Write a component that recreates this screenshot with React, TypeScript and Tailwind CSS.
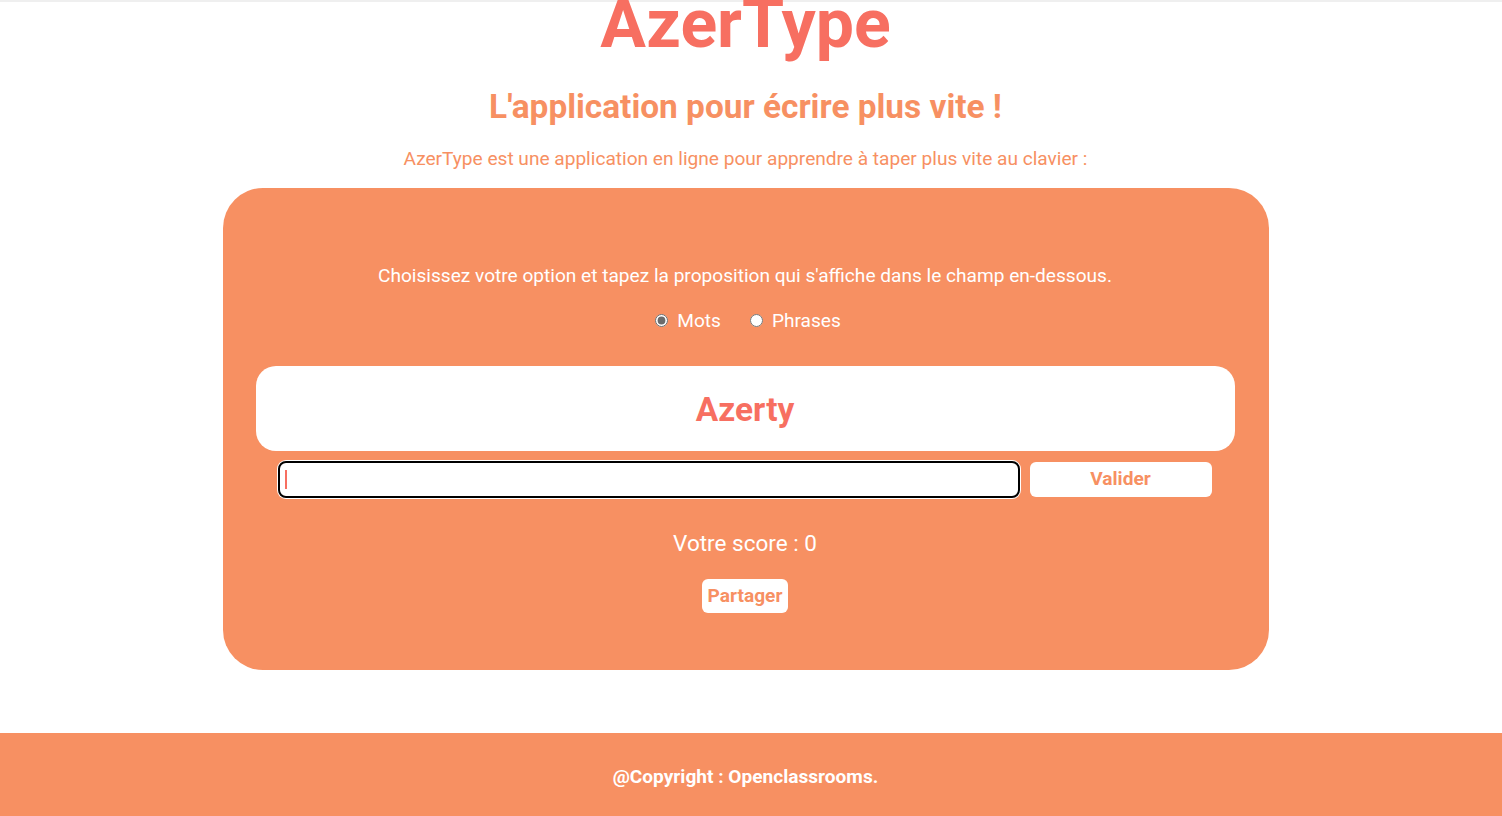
import { useState } from "react";

const App = () => {
  const [option, setOption] = useState("mots");

  return (
    <div className="min-h-screen bg-white font-['Roboto',sans-serif]">
      <div className="h-[2px] bg-[#efefef]" />
      <main className="pr-[11px] flex flex-col items-center">
        <h1 className="mt-[-12px] text-[68px] leading-none font-bold text-[#f76f61]">
          AzerType
        </h1>
        <h2 className="mt-[32px] text-[33.4px] leading-none font-bold text-[#f79062]">
          L'application pour écrire plus vite !
        </h2>
        <p className="mt-[26px] text-[19.1px] leading-none text-[#f79062]">
          AzerType est une application en ligne pour apprendre à taper plus vite au clavier :
        </p>

        <section className="mt-[19px] w-[1046px] rounded-[40px] bg-[#f79062] pl-[33px] pr-[34px] pt-[78px] pb-[57px] flex flex-col items-center text-white">
          <p className="text-[19.1px] leading-none">
            Choisissez votre option et tapez la proposition qui s'affiche dans le champ en-dessous.
          </p>
          <div className="mt-[26px] ml-[6px] flex items-center gap-[29px] text-[19.1px] leading-none">
            <label className="flex items-center gap-[9px]">
              <input
                type="radio"
                name="option"
                checked={option === "mots"}
                onChange={() => setOption("mots")}
                className="w-[13px] h-[13px] accent-[#6b6b6b]"
              />
              Mots
            </label>
            <label className="flex items-center gap-[9px]">
              <input
                type="radio"
                name="option"
                checked={option === "phrases"}
                onChange={() => setOption("phrases")}
                className="w-[13px] h-[13px]"
              />
              Phrases
            </label>
          </div>

          <div className="mt-[36px] w-full h-[85px] pt-[3px] rounded-[20px] bg-white flex items-center justify-center">
            <span className="text-[33.4px] font-bold text-[#f76f61]">Azerty</span>
          </div>

          <div className="mt-[10px] w-full flex items-center gap-[10px] pl-[22px] pr-[23px]">
            <div className="relative flex-1">
              <input
                type="text"
                className="w-full h-[37px] rounded-[8px] border-2 border-black bg-white ring-1 ring-white outline-none px-2"
              />
              <span className="absolute left-[7px] top-[9px] w-[2px] h-[19px] bg-[#f76f61]" />
            </div>
            <button className="w-[182px] h-[35px] rounded-[6px] bg-white text-[19.1px] font-bold text-[#f79062]">
              Valider
            </button>
          </div>

          <p className="mt-[34px] text-[22.5px] leading-none">Votre score : 0</p>

          <button className="mt-[25px] h-[34px] px-[6px] rounded-[6px] bg-white text-[19.1px] font-bold text-[#f79062]">
            Partager
          </button>
        </section>
      </main>

      <footer className="mt-[63px] h-[88px] bg-[#f79062] pr-[11px] flex items-center justify-center">
        <p className="text-[19.1px] font-bold text-white">@Copyright : Openclassrooms.</p>
      </footer>
    </div>
  );
};

export default App;
